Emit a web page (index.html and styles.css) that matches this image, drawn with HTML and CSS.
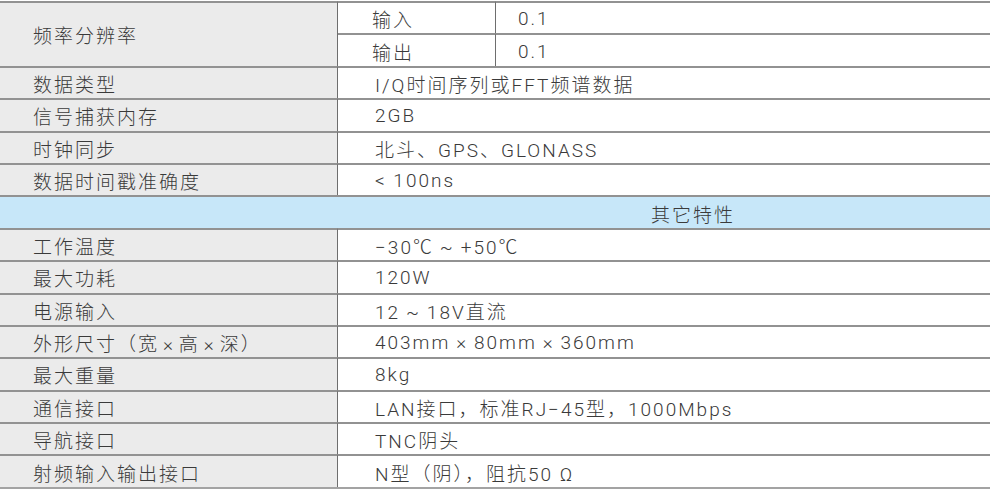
FILE: index.html
```html
<!DOCTYPE html>
<html lang="zh-CN">
<head>
<meta charset="utf-8">
<title>规格参数</title>
<link rel="stylesheet" href="styles.css">
</head>
<body>
<div class="spec">
  <div class="cell label span2">频率分辨率</div>
  <div class="cell sub">输入</div>
  <div class="cell subval">0.1</div>
  <div class="cell sub">输出</div>
  <div class="cell subval">0.1</div>

  <div class="cell label">数据类型</div>
  <div class="cell value">I/Q时间序列或FFT频谱数据</div>
  <div class="cell label">信号捕获内存</div>
  <div class="cell value">2GB</div>
  <div class="cell label">时钟同步</div>
  <div class="cell value">北斗、GPS、GLONASS</div>
  <div class="cell label">数据时间戳准确度</div>
  <div class="cell value">&lt; 100ns</div>

  <div class="cell section">其它特性</div>

  <div class="cell label">工作温度</div>
  <div class="cell value">−30℃&#8201;~&#8201;+50℃</div>
  <div class="cell label">最大功耗</div>
  <div class="cell value">120W</div>
  <div class="cell label">电源输入</div>
  <div class="cell value">12&#8201;~&#8201;18V直流</div>
  <div class="cell label">外形尺寸（宽&#8202;×&#8202;高&#8202;×&#8202;深）</div>
  <div class="cell value">403mm&#8201;×&#8201;80mm&#8201;×&#8201;360mm</div>
  <div class="cell label">最大重量</div>
  <div class="cell value">8kg</div>
  <div class="cell label">通信接口</div>
  <div class="cell value">LAN接口，标准RJ−45型，1000Mbps</div>
  <div class="cell label">导航接口</div>
  <div class="cell value">TNC阴头</div>
  <div class="cell label">射频输入输出接口</div>
  <div class="cell value">N型（阴），阻抗50 Ω</div>
</div>
</body>
</html>
```

FILE: styles.css
```css
html, body {
  margin: 0;
  padding: 0;
  background: #ffffff;
}

body {
  padding-top: 1px;
}

.spec {
  width: 990px;
  display: grid;
  grid-template-columns: 338px 158px 1fr;
  grid-auto-rows: 32.4px;
  border-bottom: 2px solid #a3a3a3;
  font-family: "Roboto", "Noto Sans CJK SC", sans-serif;
  font-size: 19px;
  font-weight: 300;
  letter-spacing: 2px;
  color: #3a3a3a;
}

.cell {
  box-sizing: border-box;
  border-top: 2px solid #929292;
  display: flex;
  align-items: center;
  padding-top: 1px;
  white-space: nowrap;
}

.label {
  grid-column: 1;
  background: #ebebeb;
  border-right: 1px solid #6e6e6e;
  padding-left: 33px;
}

.span2 {
  grid-row: span 2;
}

.sub {
  grid-column: 2;
  border-right: 1px solid #6e6e6e;
  padding-left: 34px;
}

.subval {
  grid-column: 3;
  padding-left: 22px;
}

.value {
  grid-column: 2 / 4;
  padding-left: 37px;
}

.section {
  grid-column: 1 / 4;
  background: #c7e7f9;
  padding-left: 651px;
}
```
